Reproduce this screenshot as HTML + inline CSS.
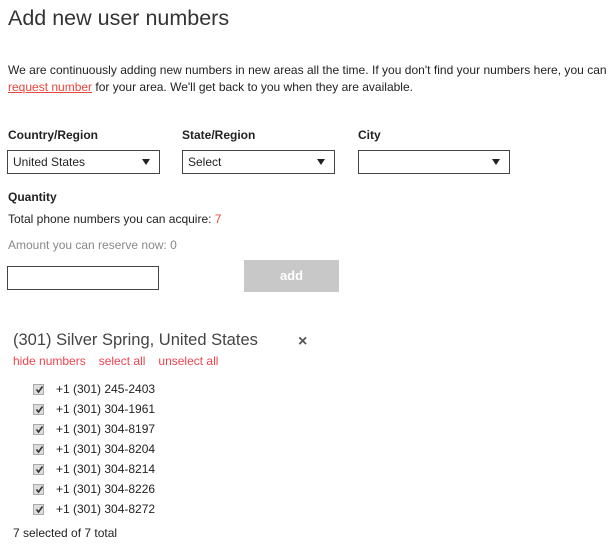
<!DOCTYPE html>
<html><head><style>
body{margin:0;width:608px;height:558px;background:#fff;font-family:"Liberation Sans",sans-serif;color:#222;position:relative;overflow:hidden}
.a{position:absolute;white-space:nowrap}
.t{font-size:12px}
.lbl{font-size:12px;font-weight:bold;color:#222}
.sel{position:absolute;height:24px;border:1px solid #444;box-sizing:border-box;font-size:12px;line-height:22px;padding-left:5px}
.sel:after{content:"";position:absolute;right:9px;top:8px;border-left:4px solid transparent;border-right:4px solid transparent;border-top:6px solid #222}
.red{color:#e8473b}
.cb{position:absolute;left:33px;width:11px;height:11px;background:#ddd;border:1px solid #aaa;box-sizing:border-box}
.cb svg{position:absolute;left:1px;top:0}
.num{position:absolute;left:56px;font-size:12px;color:#222}
</style></head><body>
<div class="a" style="left:8px;top:6px;font-size:21.5px;color:#333">Add new user numbers</div>
<div class="a t" style="left:8px;top:63px;letter-spacing:0.02px">We are continuously adding new numbers in new areas all the time. If you don't find your numbers here, you can</div>
<div class="a t" style="left:8px;top:80px"><span class="red" style="text-decoration:underline">request number</span> for your area. We'll get back to you when they are available.</div>
<div class="a lbl" style="left:8px;top:128px">Country/Region</div>
<div class="a lbl" style="left:182px;top:128px">State/Region</div>
<div class="a lbl" style="left:358px;top:128px">City</div>
<div class="sel" style="left:7px;top:150px;width:153px">United States</div>
<div class="sel" style="left:182px;top:150px;width:153px">Select</div>
<div class="sel" style="left:358px;top:150px;width:152px"></div>
<div class="a lbl" style="left:8px;top:190px">Quantity</div>
<div class="a t" style="left:8px;top:212px">Total phone numbers you can acquire: <span class="red">7</span></div>
<div class="a t" style="left:8px;top:238px;color:#888">Amount you can reserve now: 0</div>
<div style="position:absolute;left:7px;top:266px;width:152px;height:24px;border:1px solid #444;box-sizing:border-box"></div>
<div style="position:absolute;left:244px;top:260px;width:95px;height:32px;background:#c8c8c8;color:#fff;font-size:13px;font-weight:bold;text-align:center;line-height:32px">add</div>
<div class="a" style="left:13px;top:331px;font-size:16.5px;color:#444">(301) Silver Spring, United States</div>
<div class="a" style="left:298px;top:333px;font-size:16px;font-weight:bold;color:#555">×</div>
<div class="a red" style="left:13px;top:354px;font-size:12px;color:#f0434e">hide numbers<span style="margin-left:13px">select all</span><span style="margin-left:13px">unselect all</span></div>
<div class="cb" style="top:384px"><svg width="9" height="9" viewBox="0 0 9 9"><path d="M1.5 4.5L3.5 7L7.5 1.5" stroke="#333" stroke-width="1.6" fill="none"/></svg></div><div class="num" style="top:382px">+1 (301) 245-2403</div>
<div class="cb" style="top:404px"><svg width="9" height="9" viewBox="0 0 9 9"><path d="M1.5 4.5L3.5 7L7.5 1.5" stroke="#333" stroke-width="1.6" fill="none"/></svg></div><div class="num" style="top:402px">+1 (301) 304-1961</div>
<div class="cb" style="top:424px"><svg width="9" height="9" viewBox="0 0 9 9"><path d="M1.5 4.5L3.5 7L7.5 1.5" stroke="#333" stroke-width="1.6" fill="none"/></svg></div><div class="num" style="top:422px">+1 (301) 304-8197</div>
<div class="cb" style="top:444px"><svg width="9" height="9" viewBox="0 0 9 9"><path d="M1.5 4.5L3.5 7L7.5 1.5" stroke="#333" stroke-width="1.6" fill="none"/></svg></div><div class="num" style="top:442px">+1 (301) 304-8204</div>
<div class="cb" style="top:464px"><svg width="9" height="9" viewBox="0 0 9 9"><path d="M1.5 4.5L3.5 7L7.5 1.5" stroke="#333" stroke-width="1.6" fill="none"/></svg></div><div class="num" style="top:462px">+1 (301) 304-8214</div>
<div class="cb" style="top:484px"><svg width="9" height="9" viewBox="0 0 9 9"><path d="M1.5 4.5L3.5 7L7.5 1.5" stroke="#333" stroke-width="1.6" fill="none"/></svg></div><div class="num" style="top:482px">+1 (301) 304-8226</div>
<div class="cb" style="top:504px"><svg width="9" height="9" viewBox="0 0 9 9"><path d="M1.5 4.5L3.5 7L7.5 1.5" stroke="#333" stroke-width="1.6" fill="none"/></svg></div><div class="num" style="top:502px">+1 (301) 304-8272</div>
<div class="a t" style="left:13px;top:526px">7 selected of 7 total</div>
</body></html>
